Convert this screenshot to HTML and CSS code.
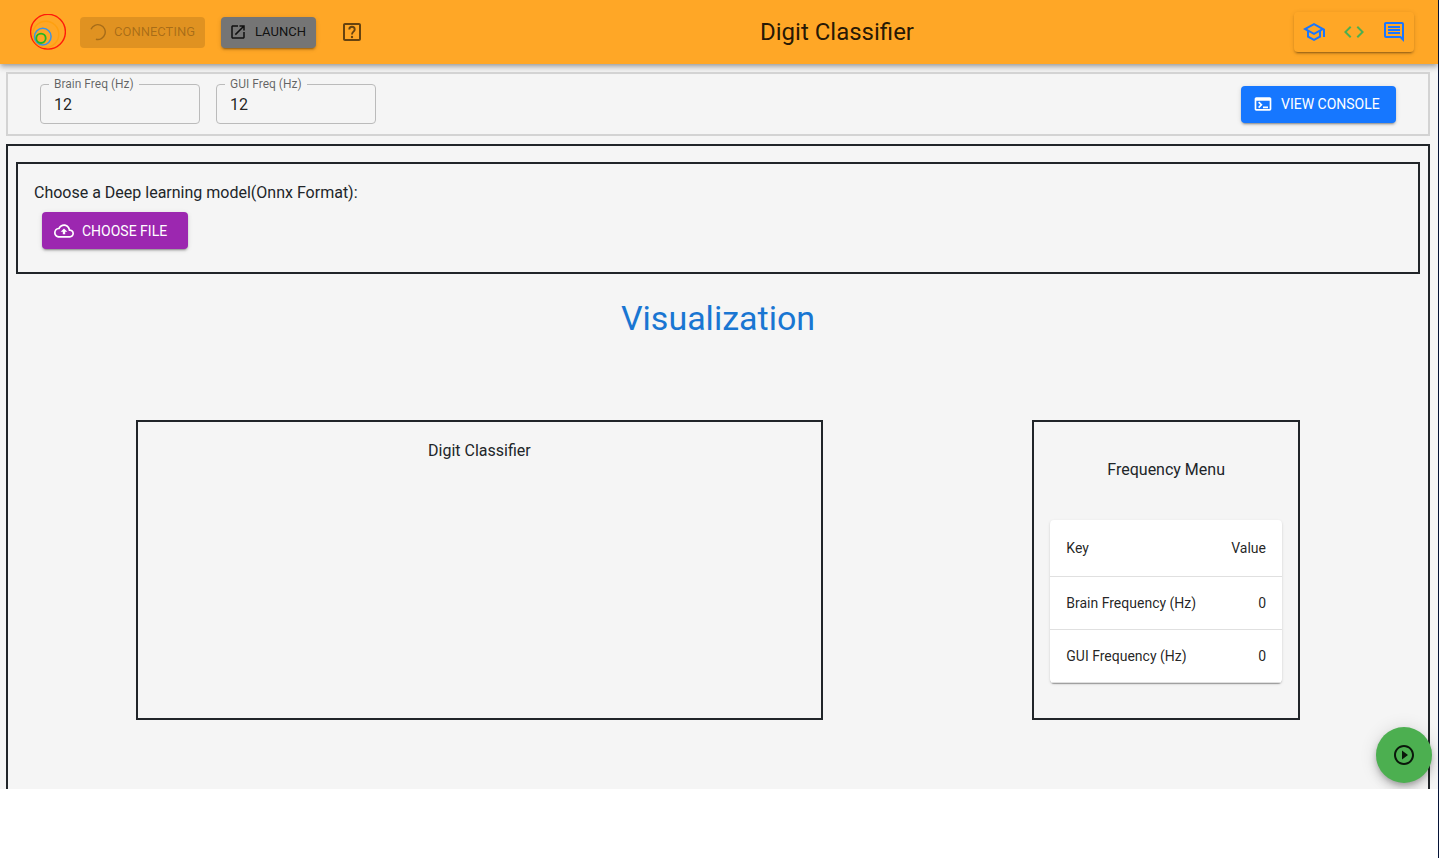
FILE: index.html
```html
<!DOCTYPE html>
<html lang="en">
<head>
<meta charset="utf-8">
<title>Digit Classifier</title>
<link rel="stylesheet" href="styles.css">
</head>
<body>
<div class="workspace">
  <header class="appbar">
    <div class="appbar-left">
      <svg class="logo" viewBox="0 0 36 36" fill="none" aria-hidden="true">
        <circle cx="18" cy="17.7" r="17.4" stroke="#ff1a0a" stroke-width="1.4"/>
        <circle cx="15.8" cy="20.2" r="13" stroke="#ffa010" stroke-width="1.4"/>
        <circle cx="12.8" cy="22.6" r="8.3" stroke="#3b93e6" stroke-width="1.5"/>
        <circle cx="11" cy="24.3" r="4.7" stroke="#20b820" stroke-width="1.8"/>
      </svg>
      <button class="btn btn-small btn-connecting" disabled>
        <svg class="icon-18" viewBox="0 0 18 18" fill="none" aria-hidden="true"><path d="M3 6.200A7.400 7.400 0 1 1 7.900 16.200" stroke="currentColor" stroke-width="1.4"/></svg>
        Connecting
      </button>
      <button class="btn btn-small btn-launch">
        <svg class="icon-18" viewBox="0 0 24 24" aria-hidden="true"><path d="M19 19H5V5h7V3H5c-1.11 0-2 .9-2 2v14c0 1.1.89 2 2 2h14c1.1 0 2-.9 2-2v-7h-2v7zM14 3v2h3.59l-9.83 9.83 1.41 1.41L19 6.41V10h2V3h-7z"/></svg>
        Launch
      </button>
      <button class="icon-btn help" aria-label="Help">
        <svg class="icon-24" viewBox="0 0 24 24" aria-hidden="true"><path d="M19 3H5c-1.1 0-2 .9-2 2v14c0 1.1.9 2 2 2h14c1.1 0 2-.9 2-2V5c0-1.1-.9-2-2-2zm0 16H5V5h14v14z"/><path d="M9.300 9.400a2.700 2.700 0 0 1 5.400 0c0 2.200-2.700 2.300-2.700 5" fill="none" stroke="currentColor" stroke-width="1.9"/><circle cx="12" cy="17" r="1.2"/></svg>
      </button>
    </div>
    <h1 class="title">Digit Classifier</h1>
    <nav class="tools" aria-label="Tools">
      <button class="icon-btn blue" aria-label="Theory"><svg class="icon-24" viewBox="0 0 24 24" aria-hidden="true"><path d="M12 3 1 9l4 2.18v6L12 21l7-3.82v-6l2-1.09V17h2V9L12 3zm6.82 6L12 12.72 5.18 9 12 5.28 18.82 9zM17 15.99l-5 2.73-5-2.73v-3.72L12 15l5-2.73v3.72z"/></svg></button>
      <button class="icon-btn green" aria-label="Code"><svg class="icon-24" viewBox="0 0 24 24" aria-hidden="true"><path d="M9.4 16.6 4.8 12l4.6-4.6L8 6l-6 6 6 6 1.4-1.4zm5.2 0 4.6-4.6-4.6-4.6L16 6l6 6-6 6-1.4-1.4z"/></svg></button>
      <button class="icon-btn blue" aria-label="Forum"><svg class="icon-24" viewBox="0 0 24 24" aria-hidden="true"><path d="M21.99 4c0-1.1-.89-2-1.99-2H4c-1.1 0-2 .9-2 2v12c0 1.1.9 2 2 2h14l4 4-.01-18zM20 4v13.17L18.83 16H4V4h16zM6 12h12v2H6zm0-3h12v2H6zm0-3h12v2H6z"/></svg></button>
    </nav>
  </header>

  <section class="settings">
    <div class="field">
      <label for="brain-freq">Brain Freq (Hz)</label>
      <input id="brain-freq" type="text" inputmode="numeric" value="12">
    </div>
    <div class="field">
      <label for="gui-freq">GUI Freq (Hz)</label>
      <input id="gui-freq" type="text" inputmode="numeric" value="12">
    </div>
    <button class="btn btn-console">
      <svg class="icon-20" viewBox="0 0 24 24" aria-hidden="true"><path d="M20 4H4c-1.11 0-2 .9-2 2v12c0 1.1.89 2 2 2h16c1.1 0 2-.9 2-2V6c0-1.1-.89-2-2-2zm0 14H4V8h16v10zm-2-1h-6v-2h6v2zM7.5 17l-1.41-1.41L8.67 13l-2.59-2.59L7.5 9l4 4-4 4z"/></svg>
      View Console
    </button>
  </section>

  <main class="exercise">
    <section class="chooser">
      <p class="chooser-text">Choose a Deep learning model(Onnx Format):</p>
      <button class="btn btn-file">
        <svg class="icon-20" viewBox="0 0 24 24" aria-hidden="true"><path d="M19.35 10.04C18.67 6.59 15.64 4 12 4 9.11 4 6.6 5.64 5.35 8.04 2.34 8.36 0 10.91 0 14c0 3.31 2.69 6 6 6h13c2.76 0 5-2.24 5-5 0-2.64-2.05-4.78-4.65-4.96zM19 18H6c-2.21 0-4-1.79-4-4 0-2.05 1.53-3.76 3.56-3.97l1.07-.11.5-.95C8.08 7.14 9.94 6 12 6c2.62 0 4.88 1.86 5.39 4.43l.3 1.5 1.53.11c1.56.1 2.78 1.41 2.78 2.96 0 1.65-1.35 3-3 3zM8 13h2.55v3h2.9v-3H16l-4-4z"/></svg>
        Choose File
      </button>
    </section>
    <h2 class="heading">Visualization</h2>
    <div class="panels">
      <section class="panel viewer">
        <p class="panel-title">Digit Classifier</p>
      </section>
      <section class="panel menu">
        <p class="panel-title">Frequency Menu</p>
        <table class="freq">
          <thead><tr><th scope="col">Key</th><th scope="col">Value</th></tr></thead>
          <tbody>
            <tr><td>Brain Frequency (Hz)</td><td>0</td></tr>
            <tr><td>GUI Frequency (Hz)</td><td>0</td></tr>
          </tbody>
        </table>
      </section>
    </div>
  </main>
  <button class="fab" aria-label="Play"><svg class="icon-24" viewBox="0 0 24 24" aria-hidden="true"><path d="M10 16.5l6-4.5-6-4.5v9zM12 2C6.48 2 2 6.48 2 12s4.480 10 10 10 10-4.480 10-10S17.520 2 12 2zm0 18c-4.410 0-8-3.590-8-8s3.590-8 8-8 8 3.590 8 8-3.590 8-8 8z"/></svg></button>
</div>
</body>
</html>
```
FILE: styles.css
```css
* { box-sizing: border-box; }

body {
  margin: 0;
  min-height: 100vh;
  border-right: 1px solid #051338;
  background: #fff;
  color: #212529;
  font-family: Roboto, "Liberation Sans", sans-serif;
  font-size: 16px;
  line-height: 24px;
}

h1, h2, p { margin: 0; font-weight: 400; }

button, input { font: inherit; color: inherit; }

button {
  border: 0;
  padding: 0;
  background: none;
  cursor: pointer;
}

svg { display: block; flex: none; fill: currentColor; }
svg[fill="none"] { fill: none; }

.icon-18 { width: 18px; height: 18px; }
.icon-20 { width: 20px; height: 20px; }
.icon-24 { width: 24px; height: 24px; }

.workspace {
  position: relative;
  display: flex;
  flex-direction: column;
  height: 92vh;
  overflow: hidden;
  background: #f5f5f5;
}

/* App bar */
.appbar {
  display: flex;
  align-items: center;
  justify-content: space-between;
  flex: none;
  height: 64px;
  padding: 0 24px;
  background: #ffa726;
  box-shadow: 0 2px 4px -1px rgba(0, 0, 0, .2), 0 4px 5px rgba(0, 0, 0, .14), 0 1px 10px rgba(0, 0, 0, .12);
}

.appbar-left { display: flex; align-items: center; padding: 0 8px 0 6px; }

.logo { width: 36px; height: 36px; margin-right: 14px; }

.title { color: rgba(0, 0, 0, .87); font-size: 24px; line-height: 32px; }

.btn {
  display: flex;
  align-items: center;
  gap: 8px;
  height: 37px;
  border-radius: 4px;
  font-size: 14px;
  text-transform: uppercase;
  white-space: nowrap;
  box-shadow: 0 3px 1px -2px rgba(0, 0, 0, .2), 0 2px 2px rgba(0, 0, 0, .14), 0 1px 5px rgba(0, 0, 0, .12);
}

.btn-small { height: 31px; margin-right: 16px; font-size: 13px; }

.btn-connecting {
  width: 125px;
  padding-left: 8px;
  background: rgba(0, 0, 0, .12);
  color: rgba(0, 0, 0, .26);
  box-shadow: none;
}

.btn-launch {
  width: 95px;
  padding-left: 8px;
  background: #757575;
  color: rgba(0, 0, 0, .87);
}

.icon-btn {
  display: grid;
  place-items: center;
  width: 40px;
  height: 40px;
}

.help { color: rgba(0, 0, 0, .6); }
.blue { color: #1976ff; }
.green { color: #4caf50; }

.tools {
  display: flex;
  border-radius: 4px;
  box-shadow: 0 3px 1px -2px rgba(0, 0, 0, .2), 0 2px 2px rgba(0, 0, 0, .14), 0 1px 5px rgba(0, 0, 0, .12);
}

/* Settings row */
.settings {
  display: flex;
  align-items: center;
  gap: 16px;
  flex: none;
  height: 64px;
  margin: 8px 8px 8px 6px;
  padding: 0 32px;
  border: 2px solid #d3d3d3;
}

.field { position: relative; }

.field label {
  position: absolute;
  top: -8px;
  left: 9px;
  padding: 0 5px;
  background: #f5f5f5;
  color: rgba(0, 0, 0, .6);
  font-size: 12px;
  line-height: 16px;
}

.field input {
  display: block;
  width: 160px;
  height: 40px;
  padding: 0 13px;
  border: 1px solid #bbb;
  border-radius: 4px;
  background: transparent;
  color: rgba(0, 0, 0, .87);
}

.btn-console {
  width: 155px;
  margin-left: auto;
  padding-left: 12px;
  background: #1677ff;
  color: #fff;
}

/* Exercise area */
.exercise {
  flex: 1 0 auto;
  margin: 0 8px 0 6px;
  padding: 16px 8px 80px;
  border: 2px solid #212529;
}

.chooser {
  height: 112px;
  padding: 17px 16px 16px;
  border: 2px solid #212529;
}

.btn-file {
  width: 146px;
  margin: 7px 8px 0;
  padding-left: 12px;
  background: #9c27b0;
  color: #fff;
}

.heading {
  margin: 24px 0 82px;
  color: #1976d2;
  font-size: 34px;
  line-height: 40px;
  text-align: center;
}

.panels {
  display: flex;
  justify-content: space-between;
  padding: 0 120px;
}

.panel {
  height: 300px;
  padding: 17px 16px 16px;
  border: 2px solid #212529;
}

.viewer { width: 59%; }
.menu { width: 23%; }
.panel-title { text-align: center; }
.menu .panel-title { margin: 19px 0 38px; }

.freq {
  width: 100%;
  border-spacing: 0;
  border-radius: 4px;
  background: #fff;
  color: rgba(0, 0, 0, .87);
  font-size: 14px;
  line-height: 20px;
  box-shadow: 0 2px 1px -1px rgba(0, 0, 0, .2), 0 1px 1px rgba(0, 0, 0, .14), 0 1px 3px rgba(0, 0, 0, .12);
}

.freq th, .freq td {
  height: 53px;
  padding: 0 16px;
  border-bottom: 1px solid #e0e0e0;
  font-weight: 400;
  text-align: left;
}

.freq th { height: 57px; }
.freq th:last-child, .freq td:last-child { text-align: right; }

.fab {
  position: absolute;
  right: 6px;
  bottom: 6px;
  display: grid;
  place-items: center;
  width: 56px;
  height: 56px;
  border-radius: 50%;
  background: #4caf50;
  color: rgba(0, 0, 0, .87);
  box-shadow: 0 3px 5px -1px rgba(0, 0, 0, .2), 0 6px 10px rgba(0, 0, 0, .14), 0 1px 18px rgba(0, 0, 0, .12);
}
```
